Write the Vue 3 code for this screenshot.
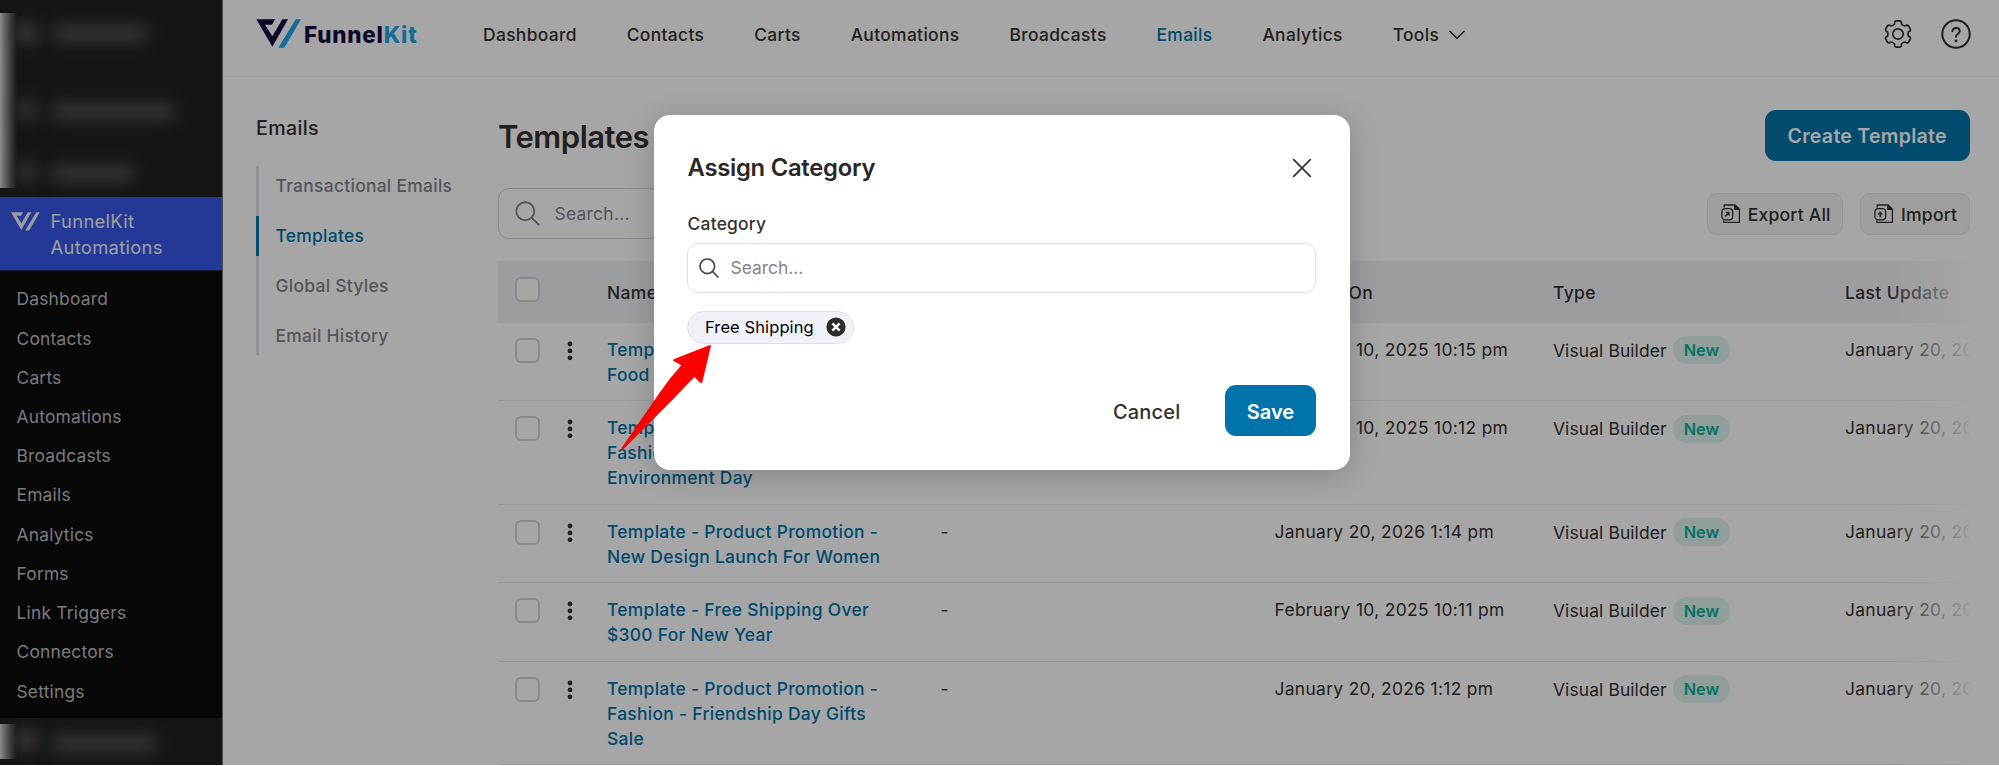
<script setup>
const adminItems = ['Dashboard', 'Contacts', 'Carts', 'Automations', 'Broadcasts', 'Emails', 'Analytics', 'Forms', 'Link Triggers', 'Connectors', 'Settings']
const navItems = ['Dashboard', 'Contacts', 'Carts', 'Automations', 'Broadcasts', 'Emails', 'Analytics', 'Tools']
const subItems = ['Transactional Emails', 'Templates', 'Global Styles', 'Email History']
const rows = [
  { name: ['Template - Product Promotion -', 'Food'], created: 'February 10, 2025 10:15 pm' },
  { name: ['Template - Product Promotion -', 'Fashion - World', 'Environment Day'], created: 'February 10, 2025 10:12 pm' },
  { name: ['Template - Product Promotion -', 'New Design Launch For Women'], created: 'January 20, 2026 1:14 pm' },
  { name: ['Template - Free Shipping Over', '$300 For New Year'], created: 'February 10, 2025 10:11 pm' },
  { name: ['Template - Product Promotion -', 'Fashion - Friendship Day Gifts', 'Sale'], created: 'January 20, 2026 1:12 pm' }
]

// Six-tooth gear outline centred on 0,0
const polar = (r, deg) => {
  const a = (deg * Math.PI) / 180
  return `${(r * Math.cos(a)).toFixed(2)} ${(r * Math.sin(a)).toFixed(2)}`
}
let gear = ''
for (let i = 0; i < 6; i++) {
  const t = i * 60 - 90
  gear += `${i ? 'L' : 'M'}${polar(10.6, t - 19)} L${polar(12.6, t - 15)} Q${polar(13.4, t - 12)} ${polar(13.3, t - 7)} L${polar(13.3, t + 7)} Q${polar(13.4, t + 12)} ${polar(12.6, t + 15)} L${polar(10.6, t + 19)} Q${polar(9.6, t + 30)} ${polar(10.6, t + 41)} `
}
gear += 'Z'
</script>

<template>
  <div class="page">
    <aside class="admin">
      <div class="blurred top">
        <i class="strip"></i>
        <i class="dot d1"></i><i class="bar b1"></i>
        <i class="dot d2"></i><i class="bar b2"></i>
        <i class="dot d3"></i><i class="bar b3"></i>
      </div>
      <div class="current">
        <svg class="mini" width="29" height="19" viewBox="0 0 135 86">
          <path fill="currentColor" d="M0 0H56L47 16H26L48 51L78 0H95L48 82Z" />
          <path fill="currentColor" d="M118 0H134L84 85H66Z" />
        </svg>
        <span>FunnelKit<br />Automations</span>
      </div>
      <ul class="submenu">
        <li v-for="item in adminItems" :key="item">{{ item }}</li>
      </ul>
      <div class="blurred bottom">
        <i class="strip"></i>
        <i class="dot d4"></i><i class="bar b4"></i>
      </div>
    </aside>

    <main class="main">
      <header class="header">
        <div class="logo">
          <svg width="46" height="30" viewBox="0 0 138 90">
            <path fill="#110c40" d="M1 1H57L48 17H27L49 52L79 1H96L49 83Z" />
            <path fill="#1fa6ea" d="M119 1H135L85 86H67Z" />
          </svg>
          <span class="word">Funnel<b>Kit</b></span>
        </div>
        <nav class="nav">
          <a v-for="item in navItems" :key="item" :class="{ on: item === 'Emails' }">{{ item }}</a>
          <svg class="chev" width="18" height="12" viewBox="0 0 18 12"><path d="M1.5 2L9 9.3L16.5 2" fill="none" stroke="#353030" stroke-width="1.5" /></svg>
        </nav>
        <div class="tools">
          <svg width="30" height="30" viewBox="-15 -15 30 30" fill="none" stroke="#353030" stroke-width="1.7" stroke-linejoin="round">
            <path :d="gear" /><circle r="5.2" />
          </svg>
          <svg width="30" height="30" viewBox="-15 -15 30 30" fill="none" stroke="#353030" stroke-width="2" stroke-linecap="round" stroke-linejoin="round">
            <circle r="13.7" />
            <path d="M-3.6 -2.7C-3.6 -7.3 3.7 -7.2 3.7 -2.7C3.7 -0.2 0 -0.2 0 2.7" />
            <circle cx="0" cy="6.9" r="1.4" fill="#353030" stroke="none" />
          </svg>
        </div>
      </header>

      <div class="content">
        <div class="subnav">
          <h3>Emails</h3>
          <ul>
            <li v-for="item in subItems" :key="item" :class="{ on: item === 'Templates' }">{{ item }}</li>
          </ul>
        </div>

        <section class="body">
          <div class="title-row">
            <h1>Templates</h1>
            <button class="primary create">Create Template</button>
          </div>
          <div class="toolbar">
            <div class="search">
              <svg width="25" height="25" viewBox="0 0 25 25" fill="none" stroke="#82838e" stroke-width="1.9" stroke-linecap="round"><circle cx="10.3" cy="10.3" r="9" /><path d="M16.8 16.8L23.6 23.6" /></svg>
              <span>Search...</span>
            </div>
            <div class="actions">
              <button class="small">
                <svg width="20" height="20" viewBox="0 0 20 20" fill="none" stroke="#353030" stroke-width="1.3" stroke-linejoin="round">
                  <path d="M3.2 3.6V1H14.2L18.4 5.2V18.4H2.8V16.6" /><path d="M13.8 1.4V5.4H18L13.8 1.4Z" fill="#353030" />
                  <rect x="0.9" y="4.7" width="10.8" height="11.2" rx="3.4" /><path d="M4.2 12.4L7.6 9" stroke-width="1.6" /><path d="M4.8 8.2H8.4V11.8Z" fill="#353030" stroke-width=".5" />
                </svg>
                Export All
              </button>
              <button class="small">
                <svg width="20" height="20" viewBox="0 0 20 20" fill="none" stroke="#353030" stroke-width="1.3" stroke-linejoin="round">
                  <path d="M3.2 3.6V1H14.2L18.4 5.2V18.4H2.8V16.6" /><path d="M13.8 1.4V5.4H18L13.8 1.4Z" fill="#353030" />
                  <rect x="0.9" y="4.7" width="10.8" height="11.2" rx="3.4" /><path d="M6.3 13.4V9" stroke-width="1.6" /><path d="M3.9 10.2L6.3 7.5L8.7 10.2Z" fill="#353030" stroke-width=".5" />
                </svg>
                Import
              </button>
            </div>
          </div>

          <div class="table">
            <div class="row head">
              <div class="select"><i class="check"></i></div>
              <div>Name</div>
              <div></div>
              <div>Created On</div>
              <div>Type</div>
              <div>Last Update</div>
            </div>
            <div v-for="(row, i) in rows" :key="i" class="row">
              <div class="select">
                <i class="check"></i>
                <svg width="6" height="20" viewBox="0 0 6 20"><circle cx="3" cy="3" r="2.4" /><circle cx="3" cy="9.9" r="2.4" /><circle cx="3" cy="16.8" r="2.4" /></svg>
              </div>
              <div class="name"><span v-for="line in row.name" :key="line">{{ line }}</span></div>
              <div>-</div>
              <div class="date">{{ row.created }}</div>
              <div class="type">Visual Builder <em>New</em></div>
              <div class="date">January 20, 2026</div>
            </div>
            <div class="fade"></div>
          </div>
        </section>
      </div>
    </main>

    <div class="overlay"></div>

    <div class="modal">
      <div class="modal-head">
        <h2>Assign Category</h2>
        <svg width="20" height="20" viewBox="0 0 20 20"><path d="M1.2 1.2L18.8 18.8M18.8 1.2L1.2 18.8" stroke="#353030" stroke-width="1.7" /></svg>
      </div>
      <label>Category</label>
      <div class="field">
        <svg width="20" height="20" viewBox="0 0 20 20" fill="none" stroke="#454545" stroke-width="1.7" stroke-linecap="round"><circle cx="8.3" cy="8.3" r="7.3" /><path d="M13.5 13.5L19 19" /></svg>
        <span>Search...</span>
      </div>
      <div class="tag">
        <span>Free Shipping</span>
        <svg width="20" height="20" viewBox="0 0 20 20"><circle cx="10" cy="10" r="9.6" fill="#2e2b2b" /><path d="M6.4 6.4L13.6 13.6M13.6 6.4L6.4 13.6" stroke="#fff" stroke-width="2.4" /></svg>
      </div>
      <div class="modal-foot">
        <button class="cancel">Cancel</button>
        <button class="primary save">Save</button>
      </div>
    </div>

    <svg class="arrow" width="92" height="108" viewBox="0 0 276 324">
      <path fill="#ff0000" d="M271 9Q273 9 272 15L247 121Q245 125 241 122L223 105Q190 139 165 166L11 321Q4 325 5 317Q60 238 120 151Q150 107 184 70L161 57Q157 54 163 51L268 10Z" />
    </svg>
  </div>
</template>

<style>
body { background: #fff; overflow: hidden; }
</style>

<style scoped>
* { box-sizing: border-box; }
.page { position: relative; display: flex; width: 1999px; height: 765px; overflow: hidden; background: #fff; color: #353030; font-family: Inter, "Liberation Sans", sans-serif; font-size: 17.4px; }
ul { list-style: none; margin: 0; padding: 0; }
h1, h2, h3 { margin: 0; }
button { border: 0; font-family: inherit; padding: 0; white-space: nowrap; }

.admin { width: 223px; flex: none; background: #202020; border-right: 1px solid #777; display: flex; flex-direction: column; color: #bcbec0; }
.blurred { position: relative; overflow: hidden; }
.top { height: 197px; }
.bottom { flex: 1; }
.strip { position: absolute; left: 0; width: 18px; background: linear-gradient(90deg, #dadada 0, #b4b4b4 15%, #6f6f6f 50%, #303030 85%, #202020 100%); }
.top .strip { top: 13px; height: 175px; }
.bottom .strip { top: 6px; height: 35px; }
.dot, .bar { position: absolute; filter: blur(8px); }
.dot { left: 15px; width: 24px; height: 24px; border-radius: 12px; background: #5c5252; }
.bar { left: 50px; height: 19px; border-radius: 8px; background: #4d4d4d; }
.d1 { top: 21px; } .b1 { top: 24px; width: 100px; }
.d2 { top: 98px; background: #4a4a4a; } .b2 { top: 102px; width: 126px; }
.d3 { top: 160px; background: #4b4747; } .b3 { top: 164px; width: 86px; }
.d4 { top: 10px; } .b4 { top: 16px; width: 108px; }
.current { height: 74px; flex: none; background: #3858e9; border-bottom: 1px solid #222b60; color: #f2f2f2; display: flex; padding: 11px 0 0 10.5px; font-size: 18.4px; line-height: 26px; letter-spacing: .3px; }
.mini { margin: 3.5px 11px 0 0; flex: none; }
.submenu { background: #0b0b0b; height: 447px; flex: none; padding: 8.4px 0 0 16.5px; }
.submenu li { height: 39.23px; line-height: 39.23px; letter-spacing: .2px; }

.main { flex: 1; min-width: 0; }
.header { height: 77px; border-bottom: 1px solid #f0f0f0; display: flex; align-items: flex-start; }
.logo { width: 260px; flex: none; display: flex; padding: 18.7px 0 0 33px; }
.word { margin-left: 2px; line-height: 31.4px; font-size: 22.4px; font-weight: 800; letter-spacing: .8px; color: #110c40; }
.word b { color: #1fa6ea; font-weight: 800; }
.nav { display: flex; align-items: center; gap: 49.9px; height: 69px; font-weight: 500; letter-spacing: .35px; }
.nav .on { color: #0073aa; }
.chev { margin-left: -41px; }
.tools { margin-left: auto; display: flex; gap: 28px; padding: 19px 28.3px 0 0; }

.content { display: flex; padding: 33px 29.5px 0 33px; }
.subnav { width: 242px; flex: none; }
.subnav h3 { font-size: 19.6px; font-weight: 500; letter-spacing: .35px; line-height: 37px; height: 35px; margin-bottom: 21px; }
.subnav ul { position: relative; border-left: 3px solid #dedfea; height: 189px; }
.subnav li { height: 39.5px; line-height: 40.4px; margin-bottom: 10.6px; padding-left: 16.5px; margin-left: -3px; border-left: 3px solid transparent; color: #82838e; font-weight: 500; letter-spacing: .3px; }
.subnav li.on { color: #0073aa; border-left-color: #0073aa; }

.body { flex: 1; min-width: 0; }
.title-row { display: flex; justify-content: space-between; height: 51px; }
h1 { font-size: 31px; font-weight: 600; letter-spacing: -.5px; line-height: 53px; }
.primary { background: #0073aa; color: #fff; border-radius: 11px; font-weight: 600; }
.create { width: 204.5px; height: 51px; font-size: 19.6px; letter-spacing: .25px; line-height: 53.5px; }
.toolbar { display: flex; justify-content: space-between; align-items: flex-start; margin-top: 27px; height: 72.7px; }
.search { display: flex; align-items: center; width: 380px; height: 51px; border: 1.5px solid #d3d3e0; border-radius: 11px; padding-left: 16px; color: #82838e; letter-spacing: .28px; }
.search span { margin-left: 14.5px; }
.actions { display: flex; gap: 17px; padding-top: 5px; }
.small { display: flex; align-items: center; height: 42px; padding: 0 11.3px 0 13px; border: 1px solid #e6e6e6; border-radius: 10px; background: #f5f5f5; color: #353030; font-size: 17.6px; font-weight: 500; letter-spacing: .2px; }
.small svg { margin-right: 7px; }

.table { position: relative; width: 1471px; overflow: hidden; }
.row { display: grid; grid-template-columns: 109px 333.5px 334px 278.5px 292px 300px; line-height: 25px; padding: 14px 0 13.5px; border-bottom: 1px solid #e8e9f1; }
.row > div { white-space: nowrap; }
.head { height: 62px; padding: 0; align-items: center; background: #f0f1f7; border: 0; font-weight: 500; letter-spacing: .4px; padding-top: 1px; }
.select { display: flex; align-items: flex-start; padding: 1px 0 0 17px; }
.head .select { padding-top: 0; margin-top: -5px; }
.check { width: 25px; height: 25px; border: 2.4px solid #d3d3de; border-radius: 6px; }
.head .check { background: #fff; }
.select svg { margin: 3px 0 0 27.3px; fill: #353030; }
.name { color: #0073aa; font-weight: 500; letter-spacing: .31px; }
.name span { display: block; }
.date { letter-spacing: .33px; }
.type { display: flex; align-items: center; height: 27px; letter-spacing: .12px; }
.type em { font-style: normal; font-weight: 600; font-size: 16.3px; letter-spacing: 0; margin-left: 6px; width: 57.5px; height: 28px; line-height: 28.5px; text-align: center; border-radius: 14px; background: #dff3ee; color: #09b29c; }
.fade { position: absolute; right: 0; top: 0; width: 84px; height: 100%; background: linear-gradient(90deg, rgba(255, 255, 255, 0), #fff 108%); }

.overlay { position: absolute; inset: 0; background: rgba(0, 0, 0, .35); }

.modal { position: absolute; left: 654px; top: 114.5px; width: 695.5px; height: 355px; border-radius: 16px; background: #fff; padding: 0 33.5px 0 33px; box-shadow: 0 5px 30px rgba(0, 0, 0, .2); display: flex; flex-direction: column; }
.modal-head { display: flex; justify-content: space-between; align-items: center; height: 106px; flex: none; padding-right: 4px; }
h2 { font-size: 23.8px; font-weight: 600; letter-spacing: -.26px; color: #2a2727; padding-left: .5px; }
label { height: 22px; line-height: 5px; font-weight: 500; letter-spacing: .25px; padding-left: .5px; }
.field { display: flex; align-items: center; height: 50px; flex: none; border: 1.3px solid #dedfea; border-radius: 11px; padding-left: 11px; color: #82838e; }
.field span { margin-left: 11.5px; }
.tag { align-self: flex-start; display: flex; align-items: center; width: 167px; height: 33.5px; margin-top: 18px; border: 1.3px solid #dedfea; border-radius: 17px; background: #f1f2f9; color: #000; font-size: 16.5px; letter-spacing: .1px; padding: 0 7px 0 17px; justify-content: space-between; }
.modal-foot { display: flex; justify-content: flex-end; align-items: center; margin-top: 41.4px; }
.cancel { background: none; color: #353030; font-size: 20px; font-weight: 500; letter-spacing: .2px; margin-right: 44.5px; padding-top: 1.5px; }
.save { width: 91px; height: 51px; font-size: 20px; padding-top: 1.5px; }

.arrow { position: absolute; left: 620px; top: 342px; }
</style>
